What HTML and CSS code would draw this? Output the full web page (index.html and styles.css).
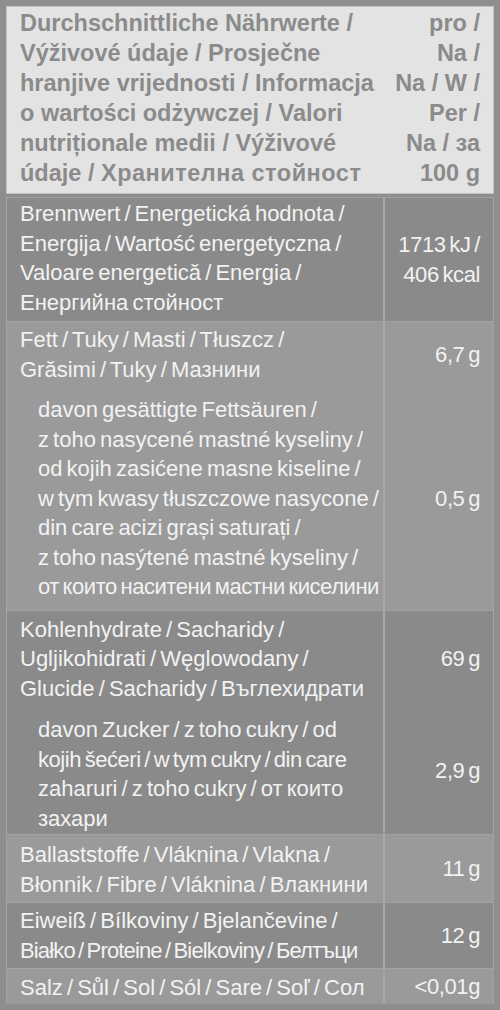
FILE: index.html
```html
<!DOCTYPE html>
<html lang="de">
<head>
<meta charset="utf-8">
<title>Nährwerte</title>
<link rel="stylesheet" href="styles.css">
</head>
<body>
<main class="panel">
  <header class="head">
    <div class="head-label">Durchschnittliche Nährwerte /<br>Výživové údaje / Prosječne<br>hranjive vrijednosti / Informacja<br>o wartości odżywczej / Valori<br>nutriționale medii / Výživové<br>údaje / <span lang="bg" class="bg-head">Хранителна стойност</span></div>
    <div class="head-value">pro /<br>Na /<br>Na / W /<br>Per /<br>Na / за<br>100 g</div>
  </header>

  <section class="group group--dark group--energy">
    <div class="row row--main">
      <div class="label">Brennwert / Energetická hodnota /<br>Energija / Wartość energetyczna /<br>Valoare energetică / Energia /<br><span lang="bg">Енергийна стойност</span></div>
      <div class="value">1713 kJ /<br>406 kcal</div>
    </div>
  </section>

  <section class="group group--light group--fat">
    <div class="row row--main">
      <div class="label">Fett / Tuky / Masti / Tłuszcz /<br>Grăsimi / Tuky / <span lang="bg">Мазнини</span></div>
      <div class="value">6,7 g</div>
    </div>
    <div class="row row--sub">
      <div class="label">davon gesättigte Fettsäuren /<br>z toho nasycené mastné kyseliny /<br>od kojih zasićene masne kiseline /<br>w tym kwasy tłuszczowe nasycone /<br>din care acizi grași saturați /<br>z toho nasýtené mastné kyseliny /<br><span lang="bg" class="condensed">от които наситени мастни киселини</span></div>
      <div class="value">0,5 g</div>
    </div>
  </section>

  <section class="group group--dark group--carbs">
    <div class="row row--main">
      <div class="label">Kohlenhydrate / Sacharidy /<br>Ugljikohidrati / Węglowodany /<br>Glucide / Sacharidy / <span lang="bg">Въглехидрати</span></div>
      <div class="value">69 g</div>
    </div>
    <div class="row row--sub">
      <div class="label">davon Zucker / z toho cukry / od<br><span class="condensed">kojih šećeri / w tym cukry / din care</span><br>zaharuri / z toho cukry / <span lang="bg">от които</span><br><span lang="bg">захари</span></div>
      <div class="value">2,9 g</div>
    </div>
  </section>

  <section class="group group--light group--fibre">
    <div class="row row--main">
      <div class="label">Ballaststoffe / Vláknina / Vlakna /<br>Błonnik / Fibre / Vláknina / <span lang="bg">Влакнини</span></div>
      <div class="value">11 g</div>
    </div>
  </section>

  <section class="group group--dark group--protein">
    <div class="row row--main">
      <div class="label">Eiweiß / Bílkoviny / Bjelančevine /<br><span class="condensed-more">Białko / Proteine / Bielkoviny / <span lang="bg">Белтъци</span></span></div>
      <div class="value">12 g</div>
    </div>
  </section>

  <section class="group group--light group--salt">
    <div class="row row--main">
      <div class="label">Salz / Sůl / Sol / Sól / Sare / Soľ / <span lang="bg">Сол</span></div>
      <div class="value">&lt;0,01g</div>
    </div>
  </section>
</main>
</body>
</html>
```

FILE: styles.css
```css
* {
  box-sizing: border-box;
  margin: 0;
  padding: 0;
}

html,
body {
  width: 500px;
  height: 1010px;
}

body {
  background: #8e8e8e;
  font-family: "Liberation Sans", Arial, sans-serif;
  overflow: hidden;
}

.panel {
  padding: 6px 6px 0 6px;
}

/* header block */
.head {
  display: grid;
  grid-template-columns: 1fr auto;
  background: #e3e3e3;
  border: 1px solid #c2c2c2;
  padding: 1px 13px 5px 13px;
  margin-bottom: 3px;
  color: #8b8b8b;
  font-weight: bold;
  font-size: 23.5px;
  line-height: 30px;
  white-space: nowrap;
}

.head-value {
  text-align: right;
}

.bg-head {
  letter-spacing: 0.5px;
}

/* body groups */
.group {
  border: 1px solid #a3a3a3;
  border-bottom: none;
  color: #f2f2f2;
  font-size: 22px;
  line-height: 29.5px;
  word-spacing: -2px;
}

.group--dark {
  background: #8a8a8a;
}

.group--light {
  background: #9a9a9a;
}

.condensed {
  letter-spacing: -0.45px;
}

.condensed-more {
  letter-spacing: -0.85px;
}

.row {
  display: grid;
  grid-template-columns: 1fr 110px;
}

.label {
  padding: 4px 0 3px 13px;
  white-space: nowrap;
  overflow: hidden;
}

.row--sub .label {
  padding-left: 31px;
}

.value {
  display: flex;
  align-items: center;
  justify-content: flex-end;
  text-align: right;
  padding-right: 13px;
  border-left: 2px solid #a6a6a6;
  white-space: nowrap;
  letter-spacing: -0.4px;
}

/* per-group vertical rhythm */
.group--energy .label {
  padding-top: 1px;
  padding-bottom: 4px;
}

.group--fat .row--main .label {
  padding-top: 3px;
  padding-bottom: 4px;
}

.group--fat .row--sub .label {
  padding-top: 7px;
  padding-bottom: 8px;
}

.group--carbs .row--main .label {
  padding-bottom: 4px;
}

.group--carbs .row--sub .label {
  padding-top: 8px;
  padding-bottom: 1px;
}

.group--fibre .label {
  padding-top: 5px;
}

.group--protein .label {
  padding-top: 3px;
}

.group--salt .label {
  padding-bottom: 1px;
}
```
